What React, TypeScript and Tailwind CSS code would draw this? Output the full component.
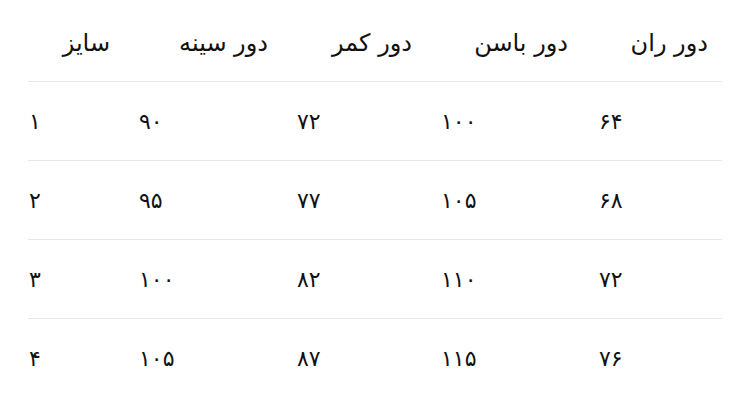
const headers = ['سایز', 'دور سینه', 'دور کمر', 'دور باسن', 'دور ران'];

const rows = [
  ['۱', '۹۰', '۷۲', '۱۰۰', '۶۴'],
  ['۲', '۹۵', '۷۷', '۱۰۵', '۶۸'],
  ['۳', '۱۰۰', '۸۲', '۱۱۰', '۷۲'],
  ['۴', '۱۰۵', '۸۷', '۱۱۵', '۷۶'],
];

// header cells sit flush right, with a gap before the next column
const headPad = ['pr-[28px]', 'pr-[28px]', 'pr-[28px]', 'pr-[30px]', 'pr-[14px]'];

export default function App() {
  return (
    <div
      className="w-[750px] h-[403px] bg-white text-[#111] px-[28px]"
      style={{ fontFamily: '"DejaVu Sans", sans-serif' }}
    >
      <div className="grid grid-cols-[110px_158px_144px_158px_1fr] h-[82px] items-center pt-1 border-b border-[#e8e8e8]">
        {headers.map((h, i) => (
          <div key={h} dir="rtl" className={`text-right text-[24px] ${headPad[i]}`}>
            {h}
          </div>
        ))}
      </div>
      {rows.map((r, ri) => (
        <div
          key={ri}
          className={`grid grid-cols-[110px_158px_144px_158px_1fr] h-[78px] items-center ${
            ri < rows.length - 1 ? 'border-b border-[#e8e8e8] box-content' : ''
          }`}
        >
          {r.map((c, ci) => (
            <div key={ci} className="text-[22px] tracking-[-2px] pl-[1px]">
              {c}
            </div>
          ))}
        </div>
      ))}
    </div>
  );
}
